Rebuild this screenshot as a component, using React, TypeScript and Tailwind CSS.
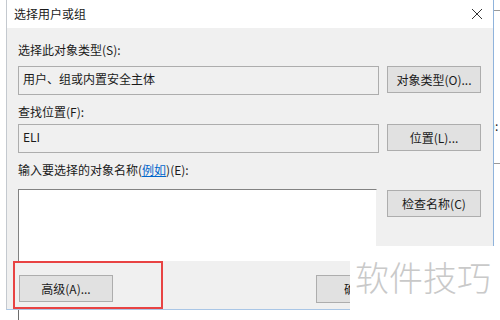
import React from "react";

const font = { fontFamily: '"Noto Sans CJK SC", "Liberation Sans", sans-serif' };

function WinButton({ label, className = "" }: { label: string; className?: string }) {
  return (
    <div
      className={
        "flex h-[27px] w-[94px] shrink-0 items-center justify-center border border-[#adadad] bg-[#e1e1e1] text-[12px] text-[#1a1a1a] " +
        className
      }
    >
      {label}
    </div>
  );
}

function ReadBox({ text }: { text: string }) {
  return (
    <div className="h-[29px] flex-1 border border-[#adadad] bg-[#f0f0f0] pl-[4px] pt-[2px] text-[12px] leading-[20px] text-[#1a1a1a]">
      {text}
    </div>
  );
}

export default function App() {
  return (
    <div className="relative flex h-[320px] w-[500px] overflow-hidden bg-white" style={font}>
      <div className="w-[6px] shrink-0 bg-white" />

      {/* dialog */}
      <div className="flex w-[488px] shrink-0 flex-col">
        <div className="flex h-[310px] flex-col border-l border-r border-l-[#c4c9cf] border-r-[#8fb3dc] border-b border-b-[#a9c6e6] bg-[#f0f0f0]">
          <div className="flex h-[28px] shrink-0 items-center justify-between bg-white pl-[7px] pr-[9px]">
            <span className="text-[12px] text-[#1a1a1a]">选择用户或组</span>
            <svg width="12" height="12" viewBox="0 0 12 12" className="mr-[1px]">
              <path d="M1 1 L11 11 M11 1 L1 11" stroke="#333" strokeWidth="1" fill="none" />
            </svg>
          </div>

          <div className="flex flex-1 flex-col pl-[11px] pr-[12px] text-[12px] text-[#1a1a1a]">
            <div className="mt-[14px] leading-[16px]">选择此对象类型(S):</div>
            <div className="mt-[8px] flex items-start gap-[8px]">
              <ReadBox text="用户、组或内置安全主体" />
              <WinButton label="对象类型(O)..." />
            </div>

            <div className="mt-[9px] leading-[16px]">查找位置(F):</div>
            <div className="mt-[4px] flex items-start gap-[8px]">
              <ReadBox text="ELI" />
              <WinButton label="位置(L)..." />
            </div>

            <div className="mt-[9px] leading-[16px]">
              输入要选择的对象名称(<span className="text-[#0066cc] underline">例如</span>)(E):
            </div>
            <div className="mt-[11px] flex items-start">
              <div className="h-[73px] w-[359px] border border-t-[#828282] border-l-[#828282] border-r-[#f0f0f0] border-b-[#f0f0f0] bg-white" />
              <WinButton label="检查名称(C)" className="ml-auto mt-[1px]" />
            </div>

            <div className="mt-[13px] flex items-start">
              <WinButton label="高级(A)..." className="ml-[1px]" />
              <div className="ml-[203px] flex h-[28px] w-[80px] shrink-0 items-center justify-center border border-[#adadad] bg-[#e1e1e1] text-[12px]">
                确定
              </div>
            </div>
          </div>
        </div>
        <div className="flex flex-1 bg-white">
          <div className="ml-[12px] w-px bg-[#6d6d6d]" />
        </div>
      </div>

      {/* background window edge */}
      <div className="flex w-[6px] shrink-0 flex-col bg-white">
        <div className="mt-[10px] h-px bg-[#9a9a9a]" />
        <div className="mt-[107px] overflow-hidden whitespace-nowrap text-[12px] leading-[16px] text-[#1a1a1a]">
          <span className="-ml-[3px] inline-block">):</span>
        </div>
        <div className="mt-[29px] h-px bg-[#9a9a9a]" />
      </div>

      {/* highlight box */}
      <div className="absolute left-[13px] top-[261px] h-[48px] w-[150px] border-2 border-[#e84343]" />

      {/* watermark */}
      <div className="absolute left-[350px] top-[246px] flex h-[74px] w-[150px] items-start bg-white pl-[5px] pt-[14px]">
        <span className="text-[34px] leading-none font-light text-[#c9c9c9]">软件技巧</span>
      </div>
    </div>
  );
}
